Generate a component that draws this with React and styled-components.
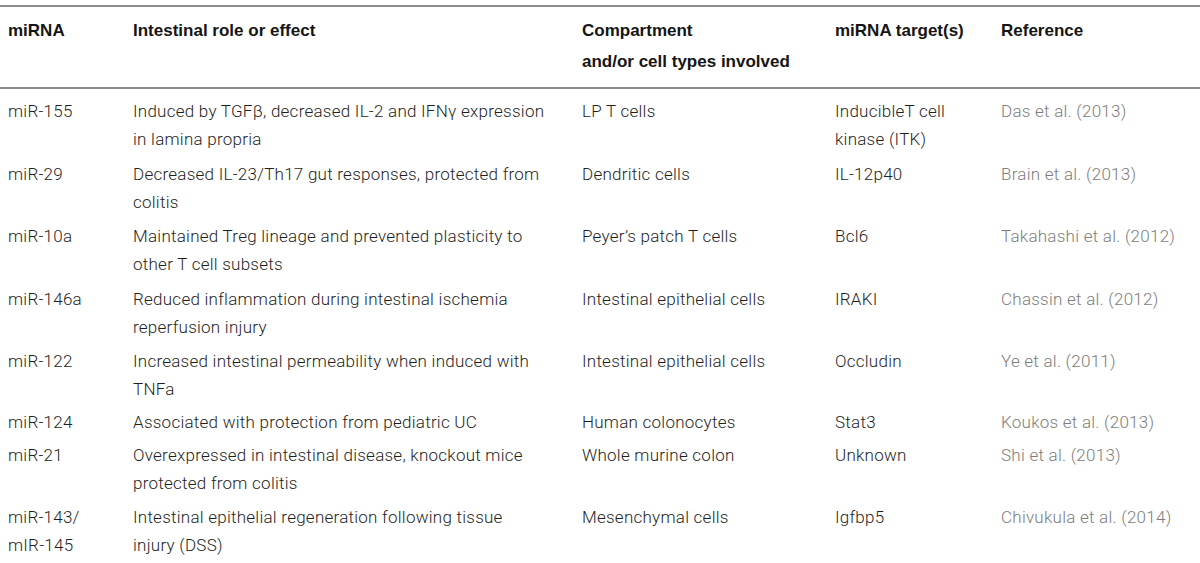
import React from "react";
import styled, { createGlobalStyle } from "styled-components";

const Global = createGlobalStyle`
  html, body { margin: 0; padding: 0; background: #fff; }
  body { font-family: Roboto, "Liberation Sans", Arial, sans-serif; }
`;

const Page = styled.div`
  width: 1200px;
  padding-top: 5px;
`;

const Table = styled.div`
  display: flex;
  flex-direction: column;
  border-top: 2px solid #8c8c8c;
`;

const cols = "125px 449px 253px 166px 1fr";

const HeaderRow = styled.div`
  display: grid;
  grid-template-columns: ${cols};
  padding: 8px 0 10px 8px;
  border-bottom: 2px solid #8c8c8c;
`;

const HeadCell = styled.div`
  font-family: "Liberation Sans", Arial, sans-serif;
  font-weight: 700;
  font-size: 17px;
  line-height: 31px;
  color: #151515;
`;

const Body = styled.div`
  display: flex;
  flex-direction: column;
  padding-top: 5px;
`;

const Row = styled.div`
  display: grid;
  grid-template-columns: ${cols};
  padding: ${(p) => (p.$tight ? "1.5px" : "3.25px")} 0 ${(p) => (p.$tight ? "1.5px" : "3.25px")} 8px;
`;

const Cell = styled.div`
  font-family: Roboto, "Liberation Sans", Arial, sans-serif;
  font-weight: 300;
  font-size: 17px;
  letter-spacing: 0.25px;
  line-height: 28px;
  color: ${(p) => (p.$muted ? "#7d7d7d" : "#1f1f1f")};
  white-space: nowrap;
`;

const Line = styled.span`
  display: block;
`;

const rows = [
  {
    mirna: ["miR-155"],
    role: ["Induced by TGFβ, decreased IL-2 and IFNγ expression", "in lamina propria"],
    comp: ["LP T cells"],
    target: ["InducibleT cell", "kinase (ITK)"],
    ref: "Das et al. (2013)",
  },
  {
    mirna: ["miR-29"],
    role: ["Decreased IL-23/Th17 gut responses, protected from", "colitis"],
    comp: ["Dendritic cells"],
    target: ["IL-12p40"],
    ref: "Brain et al. (2013)",
  },
  {
    mirna: ["miR-10a"],
    role: ["Maintained Treg lineage and prevented plasticity to", "other T cell subsets"],
    comp: ["Peyer’s patch T cells"],
    target: ["Bcl6"],
    ref: "Takahashi et al. (2012)",
  },
  {
    mirna: ["miR-146a"],
    role: ["Reduced inflammation during intestinal ischemia", "reperfusion injury"],
    comp: ["Intestinal epithelial cells"],
    target: ["IRAKI"],
    ref: "Chassin et al. (2012)",
  },
  {
    mirna: ["miR-122"],
    role: ["Increased intestinal permeability when induced with", "TNFa"],
    comp: ["Intestinal epithelial cells"],
    target: ["Occludin"],
    ref: "Ye et al. (2011)",
  },
  {
    mirna: ["miR-124"],
    role: ["Associated with protection from pediatric UC"],
    comp: ["Human colonocytes"],
    target: ["Stat3"],
    ref: "Koukos et al. (2013)",
    tight: true,
  },
  {
    mirna: ["miR-21"],
    role: ["Overexpressed in intestinal disease, knockout mice", "protected from colitis"],
    comp: ["Whole murine colon"],
    target: ["Unknown"],
    ref: "Shi et al. (2013)",
  },
  {
    mirna: ["miR-143/", "mIR-145"],
    role: ["Intestinal epithelial regeneration following tissue", "injury (DSS)"],
    comp: ["Mesenchymal cells"],
    target: ["Igfbp5"],
    ref: "Chivukula et al. (2014)",
  },
];

const Lines = ({ items }) => items.map((t, i) => <Line key={i}>{t}</Line>);

export default function App() {
  return (
    <Page>
      <Global />
      <Table>
        <HeaderRow>
          <HeadCell>miRNA</HeadCell>
          <HeadCell>Intestinal role or effect</HeadCell>
          <HeadCell>
            <Line>Compartment</Line>
            <Line>and/or cell types involved</Line>
          </HeadCell>
          <HeadCell>miRNA target(s)</HeadCell>
          <HeadCell>Reference</HeadCell>
        </HeaderRow>
        <Body>
          {rows.map((r, i) => (
            <Row key={i} $tight={r.tight}>
              <Cell><Lines items={r.mirna} /></Cell>
              <Cell><Lines items={r.role} /></Cell>
              <Cell><Lines items={r.comp} /></Cell>
              <Cell><Lines items={r.target} /></Cell>
              <Cell $muted>{r.ref}</Cell>
            </Row>
          ))}
        </Body>
      </Table>
    </Page>
  );
}
